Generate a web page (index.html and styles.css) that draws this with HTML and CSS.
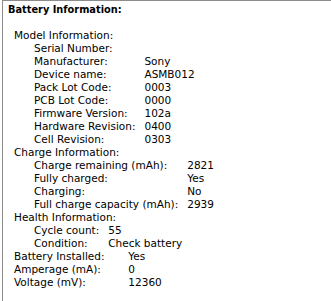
FILE: index.html
```html
<!DOCTYPE html>
<html lang="en">
<head>
    <meta charset="UTF-8">
    <title>Battery Information</title>
    <link rel="stylesheet" href="styles.css">
</head>
<body>
    <div class="panel">
        <h1 class="title">Battery Information:</h1>

        <div class="tbl top">
            <div class="key">Model Information:</div><div class="val"></div>
            <div class="tbl sub">
                <div class="key">Serial Number:</div><div class="val"></div>
                <div class="key">Manufacturer:</div><div class="val">Sony</div>
                <div class="key">Device name:</div><div class="val">ASMB012</div>
                <div class="key">Pack Lot Code:</div><div class="val">0003</div>
                <div class="key">PCB Lot Code:</div><div class="val">0000</div>
                <div class="key">Firmware Version:</div><div class="val">102a</div>
                <div class="key">Hardware Revision:</div><div class="val">0400</div>
                <div class="key">Cell Revision:</div><div class="val">0303</div>
            </div>

            <div class="key">Charge Information:</div><div class="val"></div>
            <div class="tbl sub">
                <div class="key">Charge remaining (mAh):</div><div class="val">2821</div>
                <div class="key">Fully charged:</div><div class="val">Yes</div>
                <div class="key">Charging:</div><div class="val">No</div>
                <div class="key">Full charge capacity (mAh):</div><div class="val">2939</div>
            </div>

            <div class="key">Health Information:</div><div class="val"></div>
            <div class="tbl sub">
                <div class="key">Cycle count:</div><div class="val">55</div>
                <div class="key">Condition:</div><div class="val">Check battery</div>
            </div>

            <div class="key">Battery Installed:</div><div class="val">Yes</div>
            <div class="key">Amperage (mA):</div><div class="val">0</div>
            <div class="key">Voltage (mV):</div><div class="val">12360</div>
        </div>
    </div>
</body>
</html>
```

FILE: styles.css
```css
body {
    margin: 0;
    background-color: #fff;
    font-family: "DejaVu Sans", sans-serif;
    font-size: 10.5px;
    color: #000;
}

.panel {
    margin-left: 2px;
    height: 301px;
    border-left: 1px solid #8c8c8c;
    border-top: 1px solid #8c8c8c;
    padding: 2px 0 0 5px;
}

.title {
    margin: 0;
    font-size: 9.8px;
    font-weight: bold;
    line-height: 13px;
}

.tbl {
    display: grid;
    grid-template-columns: max-content 1fr;
    column-gap: 9px;
    line-height: 13px;
}

.top {
    margin: 13px 0 0 6px;
}

.sub {
    grid-column: 1 / -1;
    margin-left: 20px;
}

.key, .val {
    white-space: nowrap;
}
```
